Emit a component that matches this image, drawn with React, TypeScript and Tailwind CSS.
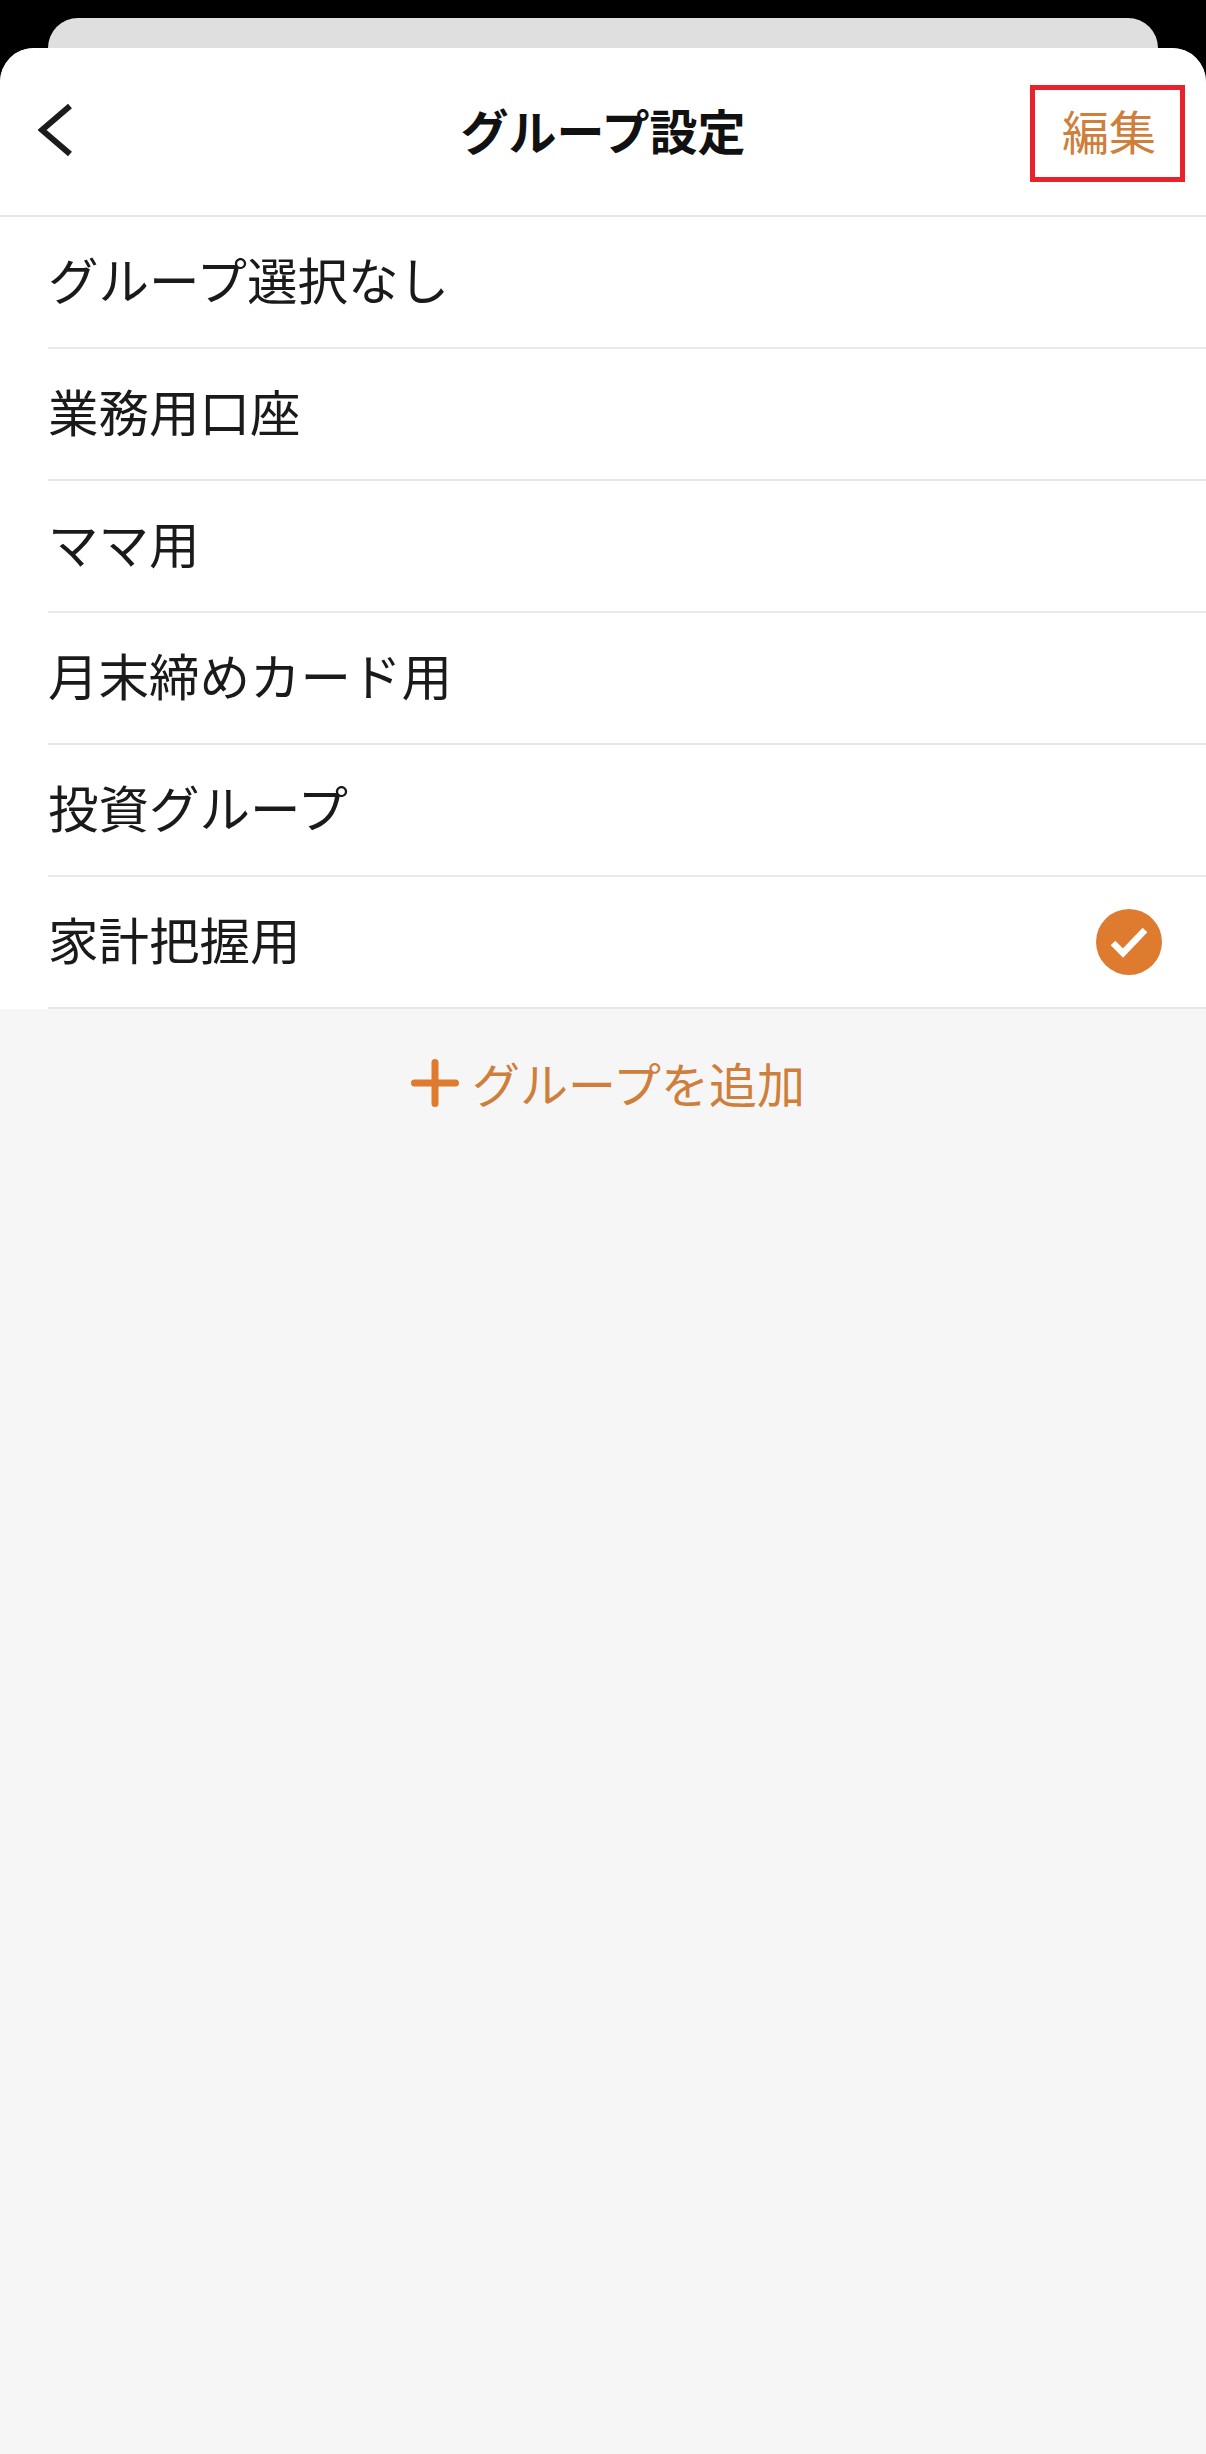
const groups = ["グループ選択なし", "業務用口座", "ママ用", "月末締めカード用", "投資グループ", "家計把握用"];

const font = "[font-family:'Noto_Sans_CJK_JP','Noto_Sans',sans-serif]";

export default function App() {
  return (
    <div className={`flex h-[2454px] w-[1206px] flex-col overflow-hidden bg-black pt-[18px] ${font}`}>
      {/* Card peeking out behind the sheet */}
      <div className="mx-[48px] h-[30px] shrink-0 rounded-t-[30px] bg-[#dfdfdf]" />

      <div className="flex flex-1 flex-col overflow-hidden rounded-t-[34px] bg-[#f6f6f6]">
        <header className="grid h-[169px] shrink-0 grid-cols-[1fr_auto_1fr] items-center border-b-2 border-[#e8e8e8] bg-white">
          <button className="ml-[38px] justify-self-start" aria-label="戻る">
            <svg width="34" height="54" viewBox="0 0 34 54" fill="none" className="-mt-[3px] block">
              <path d="M32 3 L4 27 L32 51" stroke="#1c1c1c" strokeWidth="6" />
            </svg>
          </button>
          <h1 className="-mt-[6px] text-[48px] leading-none font-bold text-[#111]">グループ設定</h1>
          <div className="mt-[3px] mr-[21px] justify-self-end">
            <button className="flex h-[97px] w-[155px] items-center justify-center border-[5px] border-[#e8212b] pb-[8px] pl-[3px] text-[47px] leading-none text-[#cf7f3c]">
              編集
            </button>
          </div>
        </header>

        <ul className="bg-white">
          {groups.map((name, i) => (
            <li key={name} className="ml-[48px] flex h-[132px] items-center justify-between border-b-2 border-[#e8e8e8] pr-[44px]">
              <span className="-mt-[7px] text-[50.5px] leading-none text-[#1a1a1a]">{name}</span>
              {i === groups.length - 1 && (
                <svg width="66" height="66" viewBox="0 0 66 66" className="block">
                  <circle cx="33" cy="33" r="33" fill="#df7b2f" />
                  <path d="M17 34 L27 44 L49 21" fill="none" stroke="#fff" strokeWidth="6.5" />
                </svg>
              )}
            </li>
          ))}
        </ul>

        <button className="mt-[50px] flex items-center justify-center gap-[13px] pl-[10px]">
          <svg width="48" height="48" viewBox="0 0 48 48" className="block">
            <path d="M3.5 24 H44.5 M24 3.5 V44.5" fill="none" stroke="#df7b2f" strokeWidth="7" strokeLinecap="round" />
          </svg>
          <span className="-mt-[3px] text-[48px] leading-none text-[#cf7f3c]">グループを追加</span>
        </button>
      </div>
    </div>
  );
}
